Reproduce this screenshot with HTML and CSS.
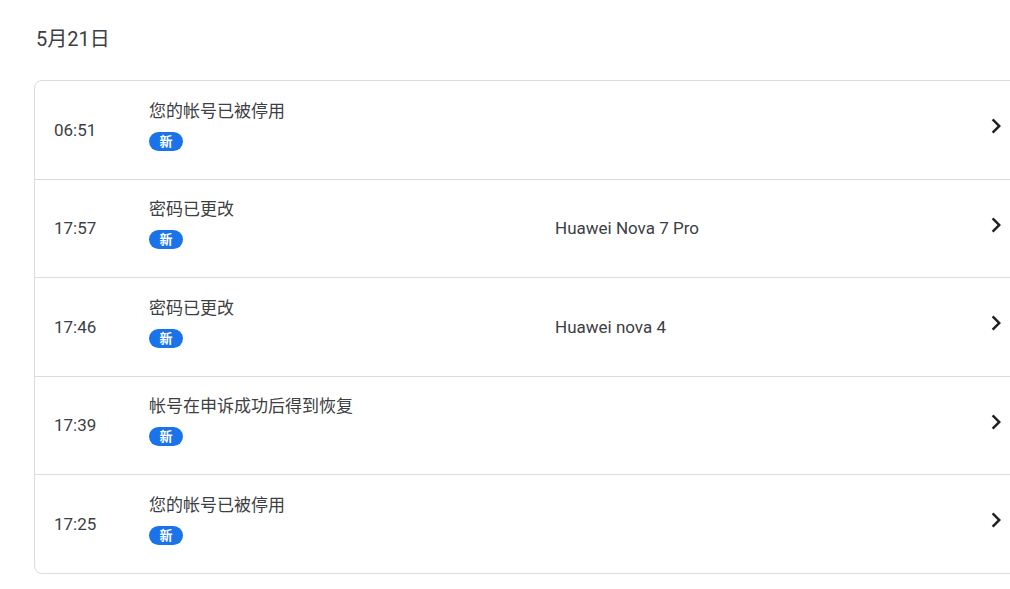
FILE: index.html
```html
<!DOCTYPE html>
<html lang="zh-CN">
<head>
  <meta charset="UTF-8" />
  <meta name="viewport" content="width=device-width, initial-scale=1.0"/>
  <title>安全活动</title>
  <link rel="stylesheet" href="styles.css">
</head>
<body>
  <div class="page">
    <h2 class="day-title">5月21日</h2>
    <div class="event-list">
      <div class="event-row">
        <div class="event-time">06:51</div>
        <div class="event-main">
          <div class="event-title">您的帐号已被停用</div>
          <span class="badge-new">新</span>
        </div>
        <div class="event-device"></div>
        <svg class="chevron" viewBox="0 0 24 24"><path d="M8.6 16.6 13.2 12 8.6 7.4 10 6l6 6-6 6z"/></svg>
      </div>
      <div class="event-row">
        <div class="event-time">17:57</div>
        <div class="event-main">
          <div class="event-title">密码已更改</div>
          <span class="badge-new">新</span>
        </div>
        <div class="event-device">Huawei Nova 7 Pro</div>
        <svg class="chevron" viewBox="0 0 24 24"><path d="M8.6 16.6 13.2 12 8.6 7.4 10 6l6 6-6 6z"/></svg>
      </div>
      <div class="event-row">
        <div class="event-time">17:46</div>
        <div class="event-main">
          <div class="event-title">密码已更改</div>
          <span class="badge-new">新</span>
        </div>
        <div class="event-device">Huawei nova 4</div>
        <svg class="chevron" viewBox="0 0 24 24"><path d="M8.6 16.6 13.2 12 8.6 7.4 10 6l6 6-6 6z"/></svg>
      </div>
      <div class="event-row">
        <div class="event-time">17:39</div>
        <div class="event-main">
          <div class="event-title">帐号在申诉成功后得到恢复</div>
          <span class="badge-new">新</span>
        </div>
        <div class="event-device"></div>
        <svg class="chevron" viewBox="0 0 24 24"><path d="M8.6 16.6 13.2 12 8.6 7.4 10 6l6 6-6 6z"/></svg>
      </div>
      <div class="event-row">
        <div class="event-time">17:25</div>
        <div class="event-main">
          <div class="event-title">您的帐号已被停用</div>
          <span class="badge-new">新</span>
        </div>
        <div class="event-device"></div>
        <svg class="chevron" viewBox="0 0 24 24"><path d="M8.6 16.6 13.2 12 8.6 7.4 10 6l6 6-6 6z"/></svg>
      </div>
    </div>
  </div>
</body>
</html>
```
FILE: styles.css
```css
body {
  margin: 0;
  background: #fff;
  overflow: hidden;
  font-family: Roboto, "Noto Sans CJK SC", sans-serif;
  color: #3c4043;
}
.page {
  padding: 25px 0 0 34px;
  width: 1010px;
}
.day-title {
  margin: 0 0 0 2px;
  font-size: 20px;
  font-weight: 400;
  line-height: 28px;
  color: #3c4043;
}
.event-list {
  margin-top: 27px;
  width: 1000px;
  border: 1px solid #dadce0;
  border-radius: 8px;
}
.event-row {
  display: grid;
  grid-template-columns: 95px 406px 1fr 30px;
  align-items: center;
  height: 97.5px;
  padding: 0 24px 0 19px;
  border-bottom: 1px solid #dadce0;
}
.event-row:last-child {
  border-bottom: none;
}
.event-time {
  font-size: 17px;
  color: #3c4043;
}
.event-main {
  margin-bottom: 8px;
}
.event-title {
  font-size: 17px;
  line-height: 21px;
  color: #3c4043;
}
.badge-new {
  display: inline-block;
  margin-top: 10px;
  width: 34px;
  height: 19px;
  line-height: 19px;
  border-radius: 10px;
  background: #1a73e8;
  color: #fff;
  font-size: 13px;
  font-weight: 700;
  text-align: center;
}
.event-device {
  font-size: 17px;
  color: #3c4043;
}
.chevron {
  width: 30px;
  height: 30px;
  margin-bottom: 7px;
  fill: #202124;
}
```
